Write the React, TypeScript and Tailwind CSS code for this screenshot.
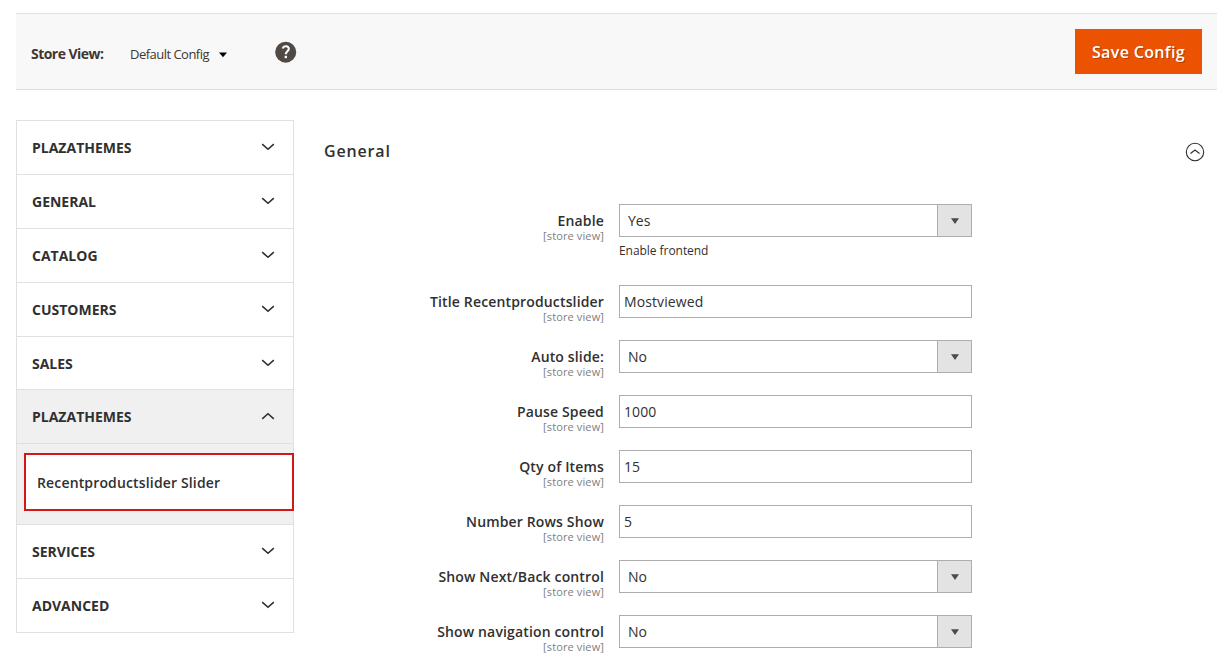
import React from 'react';

type Field = {
  label: string;
  value: string;
  kind: 'select' | 'text';
  note?: string;
};

const FIELDS: Field[] = [
  { label: 'Enable', value: 'Yes', kind: 'select', note: 'Enable frontend' },
  { label: 'Title Recentproductslider', value: 'Mostviewed', kind: 'text' },
  { label: 'Auto slide:', value: 'No', kind: 'select' },
  { label: 'Pause Speed', value: '1000', kind: 'text' },
  { label: 'Qty of Items', value: '15', kind: 'text' },
  { label: 'Number Rows Show', value: '5', kind: 'text' },
  { label: 'Show Next/Back control', value: 'No', kind: 'select' },
  { label: 'Show navigation control', value: 'No', kind: 'select' },
];

function Chevron({ up = false }: { up?: boolean }) {
  return (
    <svg
      className="-mt-[2px]"
      width="14"
      height="8"
      viewBox="0 0 14 8"
      fill="none"
      stroke="#303030"
      strokeWidth="1.6"
    >
      <path d={up ? 'M1.2 6.8 L7 1.7 L12.8 6.8' : 'M1.2 1.2 L7 6.3 L12.8 1.2'} />
    </svg>
  );
}

function Section({ title, short = false }: { title: string; short?: boolean }) {
  return (
    <div
      className={`flex items-start justify-between border-b border-[#e0e0e0] pl-[15px] pr-[18px] pt-[17px] ${
        short ? 'h-[53px]' : 'h-[54px]'
      }`}
    >
      <span className="text-[14px] leading-5 font-bold text-[#303030]">{title}</span>
      <span className="flex h-5 items-center">
        <Chevron />
      </span>
    </div>
  );
}

function Header() {
  return (
    <header className="flex h-[77px] items-center border-y border-[#e0e0e0] bg-[#f8f8f8] pr-[15px] pl-[15px]">
      <span className="mt-[5px] w-[99px] text-[14px] leading-5 font-bold tracking-[-0.53px] whitespace-nowrap text-[#41362f]">
        Store View:
      </span>
      <span className="mt-[5px] w-[88px] text-[13px] leading-5 tracking-[-0.52px] whitespace-nowrap text-[#41362f]">
        Default Config
      </span>
      <svg className="mt-[7px]" width="10" height="6" viewBox="0 0 10 6">
        <path d="M1 0.5 H9 L5 5.2 Z" fill="#000" />
      </svg>
      <svg className="mt-[1px] ml-[47px]" width="22" height="22" viewBox="0 0 22 22">
        <circle cx="10.7" cy="11.2" r="10.5" fill="#514943" />
        <path
          d="M7.7 7.5 C8.6 4.4 14 4.6 13.8 7.9 C13.7 10.2 10.8 10.3 10.8 13.2"
          fill="none"
          stroke="#fff"
          strokeWidth="2.1"
        />
        <rect x="9.6" y="14.8" width="2.4" height="2.4" fill="#fff" />
      </svg>
      <button className="ml-auto h-[45px] w-[127px] bg-[#eb5202] text-[16px] font-semibold tracking-[0.35px] whitespace-nowrap text-white [text-shadow:1px_1px_0_rgba(0,0,0,0.25)]">
        Save Config
      </button>
    </header>
  );
}

function Sidebar() {
  return (
    <nav className="w-[278px] shrink-0 border border-b-0 border-[#e0e0e0]">
      <Section title="PLAZATHEMES" />
      <Section title="GENERAL" />
      <Section title="CATALOG" />
      <Section title="CUSTOMERS" />
      <Section title="SALES" short />
      <div className="flex h-[54px] items-center justify-between border-b border-[#e0e0e0] bg-[#f0f0f0] pr-[18px] pl-[15px]">
        <span className="text-[14px] leading-5 font-bold text-[#303030]">PLAZATHEMES</span>
        <Chevron up />
      </div>
      <div className="h-[81px] border-b border-[#e0e0e0] bg-[#f0f0f0] pt-[9px] pl-[7px]">
        <div className="-mr-px flex h-[58px] items-center border-2 border-[#d31818] bg-white pt-[2px] pl-[11px]">
          <span className="text-[14px] leading-5 font-semibold tracking-[0.15px] whitespace-nowrap text-[#303030]">
            Recentproductslider Slider
          </span>
        </div>
      </div>
      <Section title="SERVICES" />
      <Section title="ADVANCED" />
    </nav>
  );
}

function Row({ field }: { field: Field }) {
  return (
    <div className={`flex ${field.note ? 'h-[81px]' : 'h-[55px]'}`}>
      <div className="flex w-[280px] flex-col items-end pt-[7px] whitespace-nowrap">
        <span className="text-[14px] leading-5 font-semibold tracking-[0.15px] text-[#303030]">{field.label}</span>
        <span className="-mt-[2px] text-[11px] leading-[14px] tracking-[0.12px] text-[#808080]">[store view]</span>
      </div>
      <div className="ml-[15px] w-[353px]">
        <div className="flex h-[33px] border border-[#adadad] bg-white">
          <span
            className={`flex-1 pt-[6px] text-[14px] leading-5 text-[#303030] ${
              field.kind === 'select' ? 'pl-2' : 'pl-1 tracking-[0.1px]'
            }`}
          >
            {field.value}
          </span>
          {field.kind === 'select' && (
            <span className="flex w-[34px] items-center justify-center border-l border-[#adadad] bg-[#e3e3e3]">
              <svg width="8" height="6" viewBox="0 0 8 6">
                <path d="M0 0.3 H8 L4 6 Z" fill="#514943" />
              </svg>
            </span>
          )}
        </div>
        {field.note && (
          <p className="mt-[5px] text-[12px] leading-[18px] tracking-[-0.05px] text-[#303030]">{field.note}</p>
        )}
      </div>
    </div>
  );
}

export default function App() {
  return (
    <div className="h-[666px] w-[1228px] overflow-hidden bg-white pt-[13px] pr-[11px] pl-4 font-['Open_Sans',sans-serif]">
      <Header />
      <div className="flex items-start pt-[30px]">
        <Sidebar />
        <main className="ml-[30px] flex-1">
          <div className="flex h-[84px] items-start justify-between pr-[12px]">
            <h2 className="mt-[19px] text-[16px] leading-6 font-semibold tracking-[0.85px] text-[#303030]">
              General
            </h2>
            <svg className="mt-[22px]" width="20" height="20" viewBox="0 0 20 20" fill="none" stroke="#303030">
              <circle cx="10" cy="10" r="8.7" strokeWidth="1.1" />
              <path d="M5.5 11.5 L10 8.1 L14.5 11.5" strokeWidth="1.2" />
            </svg>
          </div>
          {FIELDS.map((field) => (
            <Row key={field.label} field={field} />
          ))}
        </main>
      </div>
    </div>
  );
}
